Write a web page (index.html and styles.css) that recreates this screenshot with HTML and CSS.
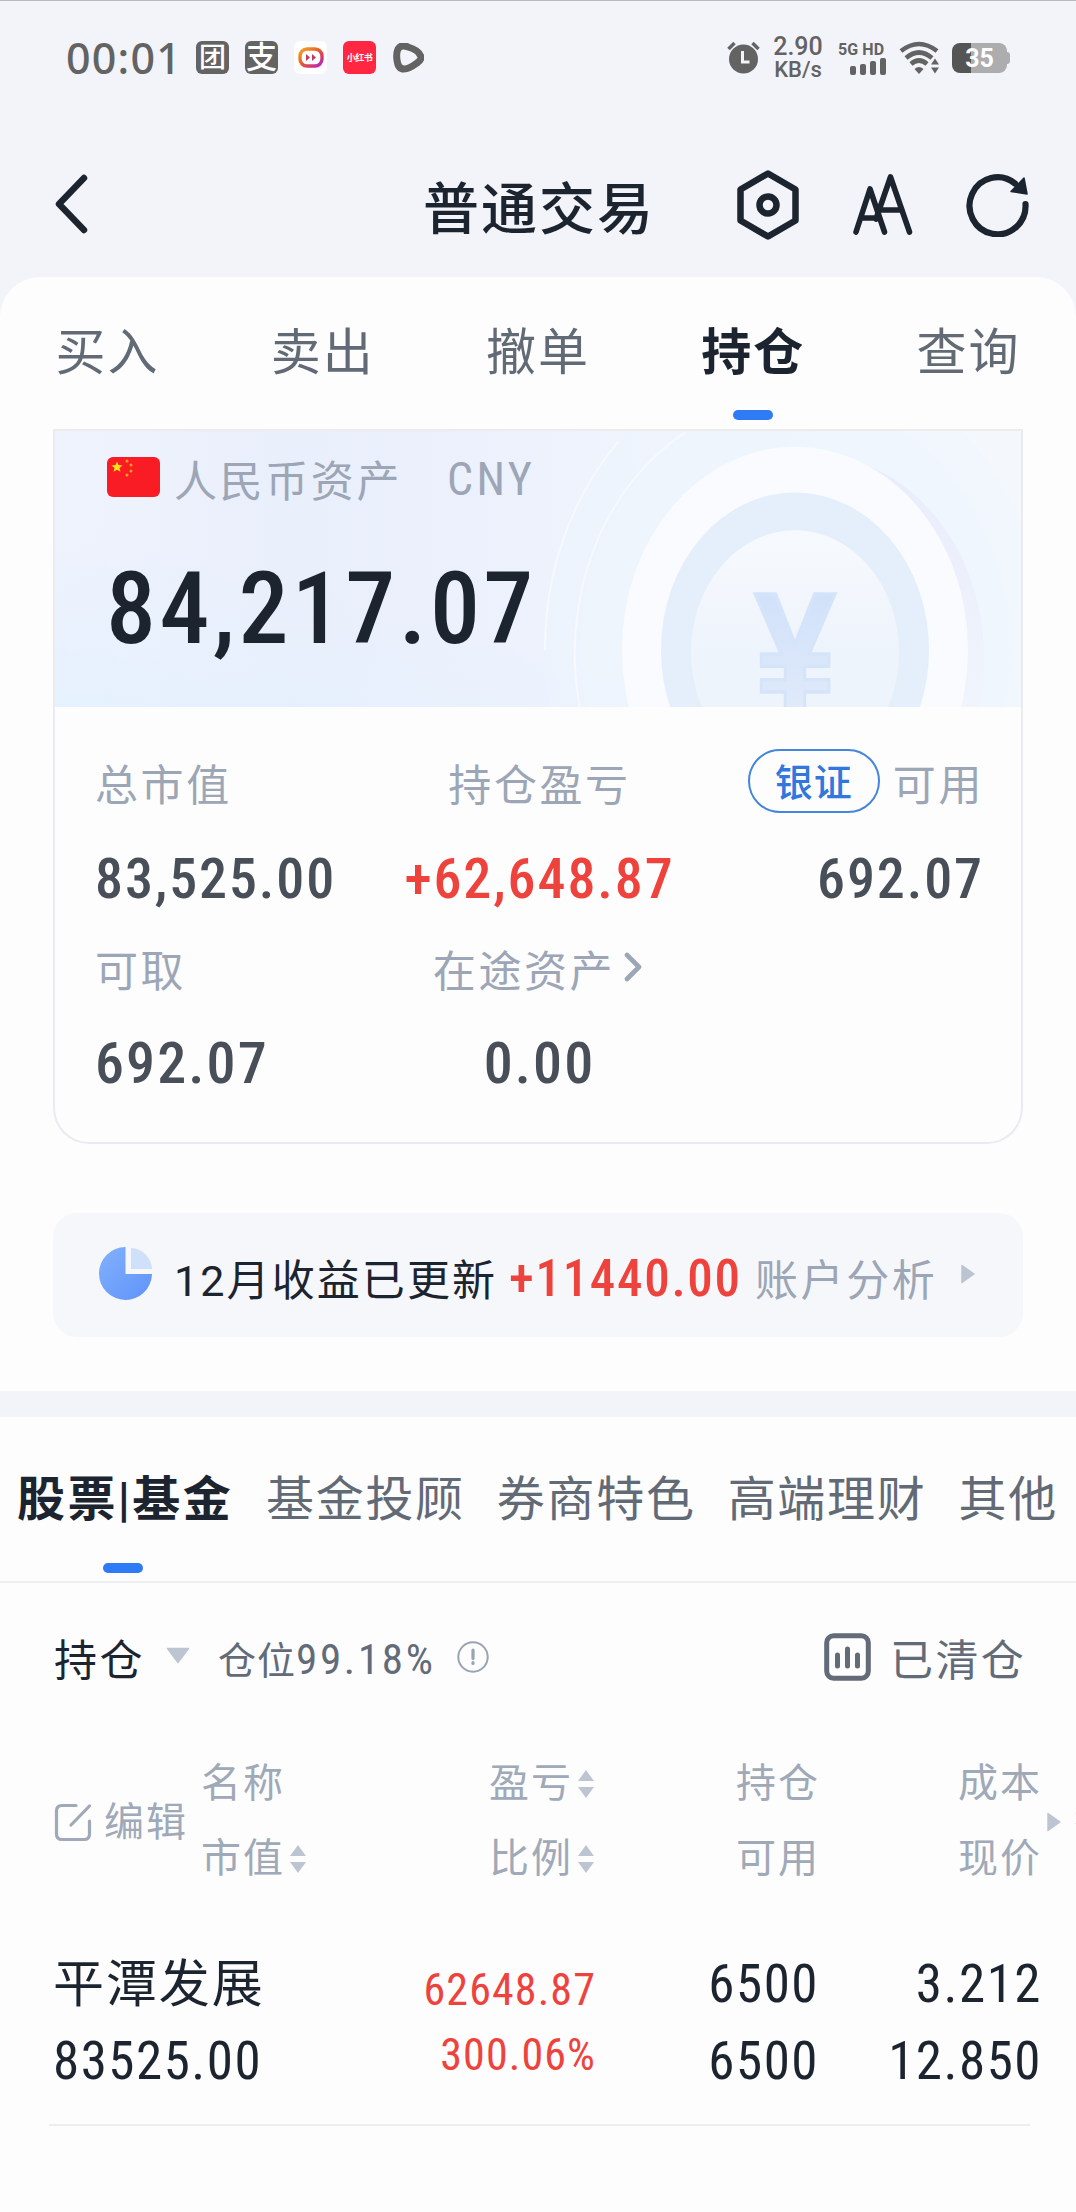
FILE: index.html
```html
<!DOCTYPE html>
<html lang="zh-CN">
<head>
	<meta charset="utf-8">
	<title>普通交易</title>
	<link rel="stylesheet" href="styles.css">
</head>
<body>
<div class="status">
	<span class="time">00:01</span>
	<span class="app gray"><i class="frame">团</i></span>
	<span class="app gray pay">支</span>
	<span class="app white">
		<svg width="26" height="22" viewBox="0 0 26 22"><defs><linearGradient id="og" x1="0" y1="0" x2="1" y2="1"><stop offset="0" stop-color="#f5a623"/><stop offset=".5" stop-color="#e8552d"/><stop offset="1" stop-color="#b620c8"/></linearGradient></defs><rect x="2" y="2" width="22" height="17" rx="7" fill="none" stroke="url(#og)" stroke-width="3.4"/><path d="M8 7l4 3.5L8 14zM14 7l4 3.5-4 3.5z" fill="#c93a5a"/></svg>
	</span>
	<span class="app red">小红书</span>
	<svg class="play" width="31" height="30" viewBox="0 0 31 30"><path d="M5 6Q8 1 15 4Q25 7 27 12Q30 16 24 20Q16 26 11 26Q5 26 4 17Q3 10 5 6Z" fill="none" stroke="#636363" stroke-width="7" stroke-linejoin="round"/></svg>
	<div class="status-r">
		<svg width="33" height="33" viewBox="0 0 33 33"><circle cx="16.500" cy="18" r="14.500" fill="#636363"/><path d="M1.500 8l6-6M31.500 8l-6-6" stroke="#636363" stroke-width="3.500"/><path d="M15.500 10v11h7" fill="none" stroke="#f3f4f9" stroke-width="3"/></svg>
		<div class="speed"><b>2.90</b><span>KB/s</span></div>
		<div class="signal">
			<span>5G HD</span>
			<svg width="36" height="17" viewBox="0 0 36 17"><g fill="#636363"><rect x="0" y="8" width="6" height="9" rx="2"/><rect x="10" y="6" width="6" height="11" rx="2"/><rect x="20" y="3" width="6" height="14" rx="2"/><rect x="30" y="0" width="6" height="17" rx="2"/></g></svg>
		</div>
		<svg class="wifi" width="41" height="33" viewBox="0 0 41 33"><g fill="none" stroke="#636363" stroke-width="4.600"><path d="M2 10Q20 -4 38 10"/><path d="M7 17Q20 6 33 17"/><path d="M12 23Q20 16 28 23"/></g><path d="M15.500 28Q20 24 24.500 28L20 33z" fill="#636363"/><path d="M32 23.500l4-6 4 6zM32 26.500h8l-4 6z" fill="#636363"/></svg>
		<div class="battery"><span>35</span></div>
	</div>
</div>
<div class="nav">
	<svg class="back" width="34" height="60" viewBox="0 0 34 60"><path d="M30 4L5 30l25 26" fill="none" stroke="#1c2430" stroke-width="6.500" stroke-linecap="round" stroke-linejoin="round"/></svg>
	<h1>普通交易</h1>
	<div class="nav-icons">
		<svg width="62" height="70" viewBox="0 0 62 70"><path d="M31 3.500L58.500 19.500v31L31 66.500L3.500 50.500v-31z" fill="none" stroke="#1c2430" stroke-width="6.500" stroke-linejoin="round"/><circle cx="31" cy="35" r="8.500" fill="none" stroke="#1c2430" stroke-width="6.500"/></svg>
		<svg width="60" height="62" viewBox="0 0 60 62"><path d="M3 58L17 15l14.500 43M8 44h18M23 45L37.500 3L56.500 58M26 36h23" fill="none" stroke="#1c2430" stroke-width="5.600" stroke-linecap="round" stroke-linejoin="round"/></svg>
		<svg width="63" height="64" viewBox="0 0 63 64"><path d="M59.500 31A28 28.500 0 1 1 49 10.500" fill="none" stroke="#1c2430" stroke-width="6.200" stroke-linecap="round"/><path d="M58 5L61 21L45 18.500z" fill="#1c2430" stroke="#1c2430" stroke-width="1.500" stroke-linejoin="round"/></svg>
	</div>
</div>
<div class="sheet">
	<ul class="tabs">
		<li>买入</li>
		<li>卖出</li>
		<li>撤单</li>
		<li class="on">持仓</li>
		<li>查询</li>
	</ul>
	<div class="card">
		<div class="asset">
			<svg class="coin" width="520" height="276" viewBox="0 0 520 276">
				<defs>
					<linearGradient id="in" x1="0" y1="0" x2="0" y2="1"><stop offset="0" stop-color="#f7fafd"/><stop offset=".5" stop-color="#eef4fc"/></linearGradient>
					<linearGradient id="ye" x1="0" y1="0" x2="0" y2="1"><stop offset="0" stop-color="#cddefa"/><stop offset="1" stop-color="#e4eefb"/></linearGradient>
					<linearGradient id="sh" x1="0" y1="0" x2="0" y2="1"><stop offset="0" stop-color="#e9ecfb"/><stop offset=".6" stop-color="#f0f4fc"/></linearGradient>
				</defs>
				<g transform="translate(290 219) scale(1 1.175)">
					<circle r="250" fill="#eef4fd" fill-opacity=".4"/>
					<circle r="215" fill="#eef5fd" fill-opacity=".6"/>
					<path d="M-250 0A250 250 0 0 1 -177 -177M-215 50A215 215 0 0 1 -110 -185" fill="none" stroke="#f6f9fe" stroke-width="2"/>
					<circle cx="17" cy="6" r="172" fill="url(#sh)"/>
					<circle r="173" fill="#f9fbfe"/>
					<circle r="134" fill="#e5eefb"/>
					<circle cy="2" r="104" fill="url(#in)"/>
					<text class="yen" x="0" y="53" text-anchor="middle" fill="url(#ye)">¥</text>
				</g>
			</svg>
			<div class="asset-hd">
				<svg width="53" height="40" viewBox="0 0 53 40"><rect width="53" height="40" rx="6" fill="#fa1c24"/><path d="M10 4.500l1.500 3.600 4 .3-3 2.600 1 3.800-3.500-2-3.500 2 1-3.800-3-2.600 4-.3z" fill="#ffe11a"/><g fill="#f9a01b"><circle cx="20" cy="4" r="1.500"/><circle cx="24" cy="8" r="1.500"/><circle cx="24" cy="14" r="1.500"/><circle cx="20" cy="18" r="1.500"/></g></svg>
				<span>人民币资产</span>
				<em>CNY</em>
			</div>
			<div class="total">84,217.07</div>
		</div>
		<div class="stats">
			<span>总市值</span>
			<span>持仓盈亏</span>
			<span><i class="pill">银证</i>可用</span>
			<b>83,525.00</b>
			<b class="up">+62,648.87</b>
			<b>692.07</b>
			<span>可取</span>
			<span>在途资产<svg class="more" width="18" height="30" viewBox="0 0 18 30"><path d="M3 3l12 12L3 27" fill="none" stroke="#9ca6b6" stroke-width="4.600" stroke-linecap="round" stroke-linejoin="round"/></svg></span>
			<span></span>
			<b class="lg">692.07</b>
			<b class="lg">0.00</b>
			<b></b>
		</div>
	</div>
	<div class="profit">
		<svg width="54" height="54" viewBox="0 0 54 54"><defs><linearGradient id="pi" x1="0" y1="0" x2="1" y2="1"><stop offset="0" stop-color="#83b1fa"/><stop offset="1" stop-color="#5e93fc"/></linearGradient></defs><path d="M26.500 0A26.500 26.500 0 1 0 53 27H26.500z" fill="url(#pi)"/><path d="M32 1A22 22 0 0 1 53 22H32z" fill="#cfe0fa"/></svg>
		<span class="month">12月收益已更新</span>
		<b>+11440.00</b>
		<span class="link">账户分析</span>
		<svg width="15" height="20" viewBox="0 0 15 20"><path d="M1 1.500L13 10L1 18.500z" fill="#bcc4d2" stroke="#bcc4d2" stroke-width="1.500" stroke-linejoin="round"/></svg>
	</div>
</div>
<div class="hold">
	<ul class="kinds">
		<li class="on">股票|基金</li>
		<li>基金投顾</li>
		<li>券商特色</li>
		<li>高端理财</li>
		<li>其他</li>
	</ul>
	<div class="filter">
		<span class="name">持仓</span>
		<svg class="down" width="24" height="17" viewBox="0 0 24 17"><path d="M1.500 1.500h21L12 15.500z" fill="#bec5d2" stroke="#bec5d2" stroke-width="1.500" stroke-linejoin="round"/></svg>
		<span class="rate">仓位<i>99.18%</i></span>
		<svg class="info" width="32" height="32" viewBox="0 0 32 32"><circle cx="16" cy="16" r="14.700" fill="none" stroke="#9aa3b3" stroke-width="2"/><path d="M16 9v8.500M16 21.500v1" stroke="#9aa3b3" stroke-width="3.200" stroke-linecap="round"/></svg>
		<svg class="chart" width="47" height="48" viewBox="0 0 47 48"><rect x="2.700" y="2.700" width="41.600" height="42.600" rx="7" fill="none" stroke="#636b78" stroke-width="5"/><path d="M13.500 22v11M23.500 16v17M33.500 22v11" stroke="#636b78" stroke-width="5" stroke-linecap="round"/></svg>
		<span class="cleared">已清仓</span>
	</div>
	<div class="thead">
		<div class="edit"><svg width="38" height="39" viewBox="0 0 38 39"><path d="M22 2.500H8q-5.500 0-5.500 5.500v23q0 5.500 5.500 5.500h22q5.500 0 5.500-5.500V18M17 22L35.500 3" fill="none" stroke="#a0a9b8" stroke-width="3.200" stroke-linecap="round"/></svg>编辑</div>
		<div class="c1"><p>名称</p><p>市值<i class="sort"></i></p></div>
		<div class="c2"><p>盈亏<i class="sort"></i></p><p>比例<i class="sort"></i></p></div>
		<div class="c3"><p>持仓</p><p>可用</p></div>
		<div class="c4"><p>成本</p><p>现价</p></div>
		<svg class="next" width="15" height="20" viewBox="0 0 15 20"><path d="M1 1.500L13 10L1 18.500z" fill="#bec5d2" stroke="#bec5d2" stroke-width="1.500" stroke-linejoin="round"/></svg>
		<div class="cut">参</div>
	</div>
	<div class="row">
		<div class="c1"><p class="stock">平潭发展</p><p>83525.00</p></div>
		<div class="c2 up"><p>62648.87</p><p>300.06%</p></div>
		<div class="c3"><p>6500</p><p>6500</p></div>
		<div class="c4"><p>3.212</p><p>12.850</p></div>
	</div>
</div>
</body>
</html>
```
FILE: styles.css
```css
*{
	margin: 0;
	padding: 0;
	box-sizing: border-box;
	list-style: none;
	font-style: normal;
}
body{
	width: 1076px;
	height: 2212px;
	overflow: hidden;
	background: #f3f4f9;
	font-family: Roboto, "Noto Sans CJK SC", sans-serif;
	color: #1c2430;
	white-space: nowrap;
}
svg{
	display: block;
	flex: none;
}
/* 状态栏 */
.status{
	height: 117px;
	border-top: 1px solid #b9b9be;
	padding: 0 66px 3px;
	display: flex;
	align-items: center;
	color: #636363;
}
.time{
	width: 130px;
	font-family: "Noto Sans", sans-serif;
	font-size: 43px;
	font-weight: 500;
	letter-spacing: 1.2px;
}
.app{
	width: 33px;
	height: 33px;
	margin-right: 16px;
	border-radius: 6px;
	display: flex;
	align-items: center;
	justify-content: center;
	color: #fff;
}
.gray{
	background: #636363;
}
.frame{
	font-size: 27px;
	line-height: 30px;
	font-weight: 500;
}
.pay{
	font-size: 31px;
	font-weight: 500;
	line-height: 33px;
}
.white{
	background: #fff;
}
.red{
	background: #ff2742;
	font-size: 9px;
	font-weight: 700;
	letter-spacing: -.5px;
}
.play{
	margin-left: 1px;
}
.status-r{
	margin-left: auto;
	display: flex;
	align-items: center;
}
.speed{
	width: 50px;
	margin: 0 15px 0 13px;
	text-align: center;
	font-size: 22px;
	line-height: 22px;
	font-weight: 500;
}
.speed b{
	display: block;
	font-size: 25px;
	line-height: 24px;
	font-weight: 500;
}
.speed span{
	display: block;
}
.signal{
	width: 48px;
	margin-right: 13px;
}
.signal span{
	display: block;
	font-size: 16px;
	line-height: 17px;
	font-weight: 700;
	letter-spacing: .1px;
}
.signal svg{
	margin-left: 12px;
}
.battery{
	position: relative;
	width: 55px;
	height: 30px;
	margin: 0 3px 0 12px;
	border-radius: 8px;
	background: linear-gradient(90deg, #555 19px, #adadb0 19px);
	color: #fff;
	font-size: 25px;
	line-height: 31px;
	font-weight: 700;
	text-align: center;
}
.battery:after{
	content: "";
	position: absolute;
	right: -3px;
	top: 9px;
	width: 3px;
	height: 12px;
	border-radius: 0 3px 3px 0;
	background: #adadb0;
}
/* 标题栏 */
.nav{
	height: 160px;
	padding: 0 47px 0 55px;
	display: grid;
	grid-template-columns: 300px 1fr 292px;
	align-items: start;
}
.back{
	margin-top: 57px;
	margin-left: -1px;
}
h1{
	margin: 56px 0 0 68px;
	font-size: 56px;
	line-height: 74px;
	font-weight: 500;
	letter-spacing: 2px;
}
.nav-icons{
	display: flex;
	align-items: center;
	justify-content: space-between;
	height: 70px;
	margin-top: 53px;
}
/* 上半部分 */
.sheet{
	height: 1114px;
	background: #fdfdfd;
	border-radius: 40px 40px 0 0;
}
.tabs{
	height: 152px;
	padding-top: 26px;
	display: flex;
}
.tabs li{
	flex: 1;
	text-align: center;
	font-size: 50px;
	line-height: 100px;
	letter-spacing: 2px;
	color: #626a76;
}
.on:after{
	content: "";
	display: block;
	width: 40px;
	height: 10px;
	margin: 7px auto 0;
	border-radius: 5px;
	background: #2f7bf5;
}
.tabs .on, .kinds .on{
	color: #1c2430;
	font-weight: 700;
}
.card{
	width: 970px;
	height: 715px;
	margin: 0 auto;
	border: 2px solid #e9ebf1;
	border-top-color: #ececec;
	border-radius: 0 0 36px 36px;
}
.asset{
	position: relative;
	height: 276px;
	padding: 17px 0 0 52px;
	overflow: hidden;
	background: linear-gradient(15deg, rgba(228,241,254,.9) 0, rgba(232,240,252,0) 35%), linear-gradient(90deg, #eff3fd, #e9effb 25%, #edf2fd 50%, #f4f8fc 80%);
}
.coin{
	position: absolute;
	top: 0;
	right: -4px;
}
.yen{
	font: 700 146px "Liberation Sans", sans-serif;
	stroke: #d6e4fa;
	stroke-width: 3px;
}
.asset-hd{
	position: relative;
	display: flex;
	align-items: center;
	height: 62px;
	color: #9ca6b6;
}
.asset-hd svg{
	margin-top: -4px;
}
.asset-hd span{
	width: 273px;
	margin: -2px 0 0 14px;
	font-size: 43px;
	letter-spacing: 2.6px;
}
.asset-hd em{
	font-size: 46px;
	font-stretch: 85%;
	letter-spacing: 3.4px;
}
.total{
	position: relative;
	margin: 38px 0 0 -1px;
	font-size: 100px;
	line-height: 122px;
	font-weight: 500;
	font-stretch: 80%;
	letter-spacing: 3.4px;
}
.stats{
	display: grid;
	grid-template-columns: 1fr auto 1fr;
	grid-template-rows: 82px 103px 84px 98px;
	align-items: center;
	padding: 38px 37px 0 40px;
}
.stats span{
	display: flex;
	align-items: center;
	margin-top: -8px;
	font-size: 43px;
	letter-spacing: 2.6px;
	color: #9ca6b6;
}
.stats b{
	font-size: 56px;
	font-weight: 480;
	font-stretch: 80%;
	letter-spacing: 1.9px;
	color: #494f58;
}
.stats .lg{
	font-size: 58px;
	letter-spacing: 2.1px;
}
.stats :nth-child(3n+2){
	justify-content: center;
	text-align: center;
}
.stats :nth-child(3n){
	justify-content: flex-end;
	text-align: right;
}
.stats .up, .up{
	color: #ee433d;
}
.pill{
	width: 132px;
	height: 64px;
	margin: -2px 13px 0 0;
	border: 2px solid #4585dc;
	border-radius: 32px;
	font-size: 38px;
	line-height: 64px;
	letter-spacing: 1px;
	font-weight: 500;
	text-align: center;
	color: #3177dd;
}
.more{
	margin: -2px 4px 0 9px;
}
.profit{
	width: 970px;
	height: 124px;
	margin: 69px auto 0;
	padding: 4px 0 0 46px;
	border-radius: 24px;
	background: #f6f7fa;
	display: flex;
	align-items: center;
	font-size: 43px;
}
.profit svg{
	margin-top: -6px;
}
.month{
	width: 335px;
	margin-left: 21px;
	letter-spacing: 2.1px;
}
.profit b{
	width: 246px;
	margin-top: 2px;
	font-size: 51px;
	font-weight: 480;
	font-stretch: 80%;
	letter-spacing: 1.7px;
	color: #ee433d;
}
.link{
	width: 206px;
	letter-spacing: 2.6px;
	color: #9ca6b6;
}
/* 持仓列表 */
.hold{
	height: 795px;
	margin-top: 26px;
	background: #fdfdfd;
}
.kinds{
	height: 166px;
	padding: 34px 0 0 17px;
	border-bottom: 2px solid #eeeff2;
	display: flex;
	font-size: 48px;
	line-height: 98px;
	letter-spacing: 1.7px;
	color: #626a76;
}
.kinds li{
	flex: none;
	margin-right: 32px;
}
.kinds .on{
	width: 217px;
	letter-spacing: 2.4px;
}
.kinds .on:after{
	margin: 14px 0 0 86px;
}
.filter{
	height: 154px;
	padding: 0 0 6px 54px;
	display: flex;
	align-items: center;
	font-size: 43px;
	letter-spacing: 2.4px;
}
.filter svg{
	margin-top: -3px;
}
.name{
	width: 112px;
}
.rate{
	width: 237px;
	margin-left: 28px;
	font-size: 38px;
	letter-spacing: 1px;
	color: #636b78;
}
.rate i{
	font-size: 43px;
	font-stretch: 80%;
	letter-spacing: 2.7px;
}
.filter .info{
	margin-left: 2px;
	margin-top: -1px;
}
.filter .chart{
	margin: -1px 19px 0 335px;
}
.cleared{
	color: #636b78;
}
.thead{
	height: 207px;
	padding: 9px 0 0 54px;
	display: flex;
	font-size: 40px;
	line-height: 75px;
	letter-spacing: 2px;
	color: #a0a9b8;
	overflow: hidden;
}
.thead div{
	flex: none;
}
.thead p{
	display: flex;
	align-items: center;
}
.edit{
	width: 147px;
	display: flex;
	align-items: center;
	height: 152px;
}
.edit svg{
	margin-right: 12px;
}
.sort{
	margin: 0 0 0 5px;
	letter-spacing: 0;
}
.sort:before, .sort:after{
	content: "";
	display: block;
	border: 8px solid transparent;
	border-top: 0;
	border-bottom: 11px solid #bec5d2;
}
.sort:after{
	margin-top: 6px;
	border-top: 11px solid #bec5d2;
	border-bottom: 0;
}
.c2 p, .c3 p, .c4 p{
	justify-content: flex-end;
	text-align: right;
}
.thead .c1{
	width: 120px;
}
.thead .c2{
	width: 273px;
}
.thead .c3{
	width: 226px;
}
.thead .c4{
	width: 222px;
}
.next{
	margin: 66px 12px 0 5px;
}
.cut{
	padding-top: 36px;
}
.row{
	width: 981px;
	height: 182px;
	margin-left: 49px;
	border-bottom: 2px solid #eee;
	display: flex;
	align-items: flex-start;
	padding: 2px 0 0 4px;
	font-size: 53px;
	font-weight: 450;
	font-stretch: 80%;
	line-height: 77px;
	letter-spacing: 1.5px;
}
.row .c1{
	width: 270px;
	flex: none;
}
.stock{
	font-size: 51px;
	font-weight: 400;
	letter-spacing: 1.9px;
}
.row .c2{
	width: 273px;
	flex: none;
	padding-top: 12px;
	font-size: 44px;
	line-height: 65px;
	letter-spacing: 1.1px;
}
.row .c3{
	width: 223px;
	flex: none;
}
.row .c4{
	width: 223px;
	flex: none;
}
```
